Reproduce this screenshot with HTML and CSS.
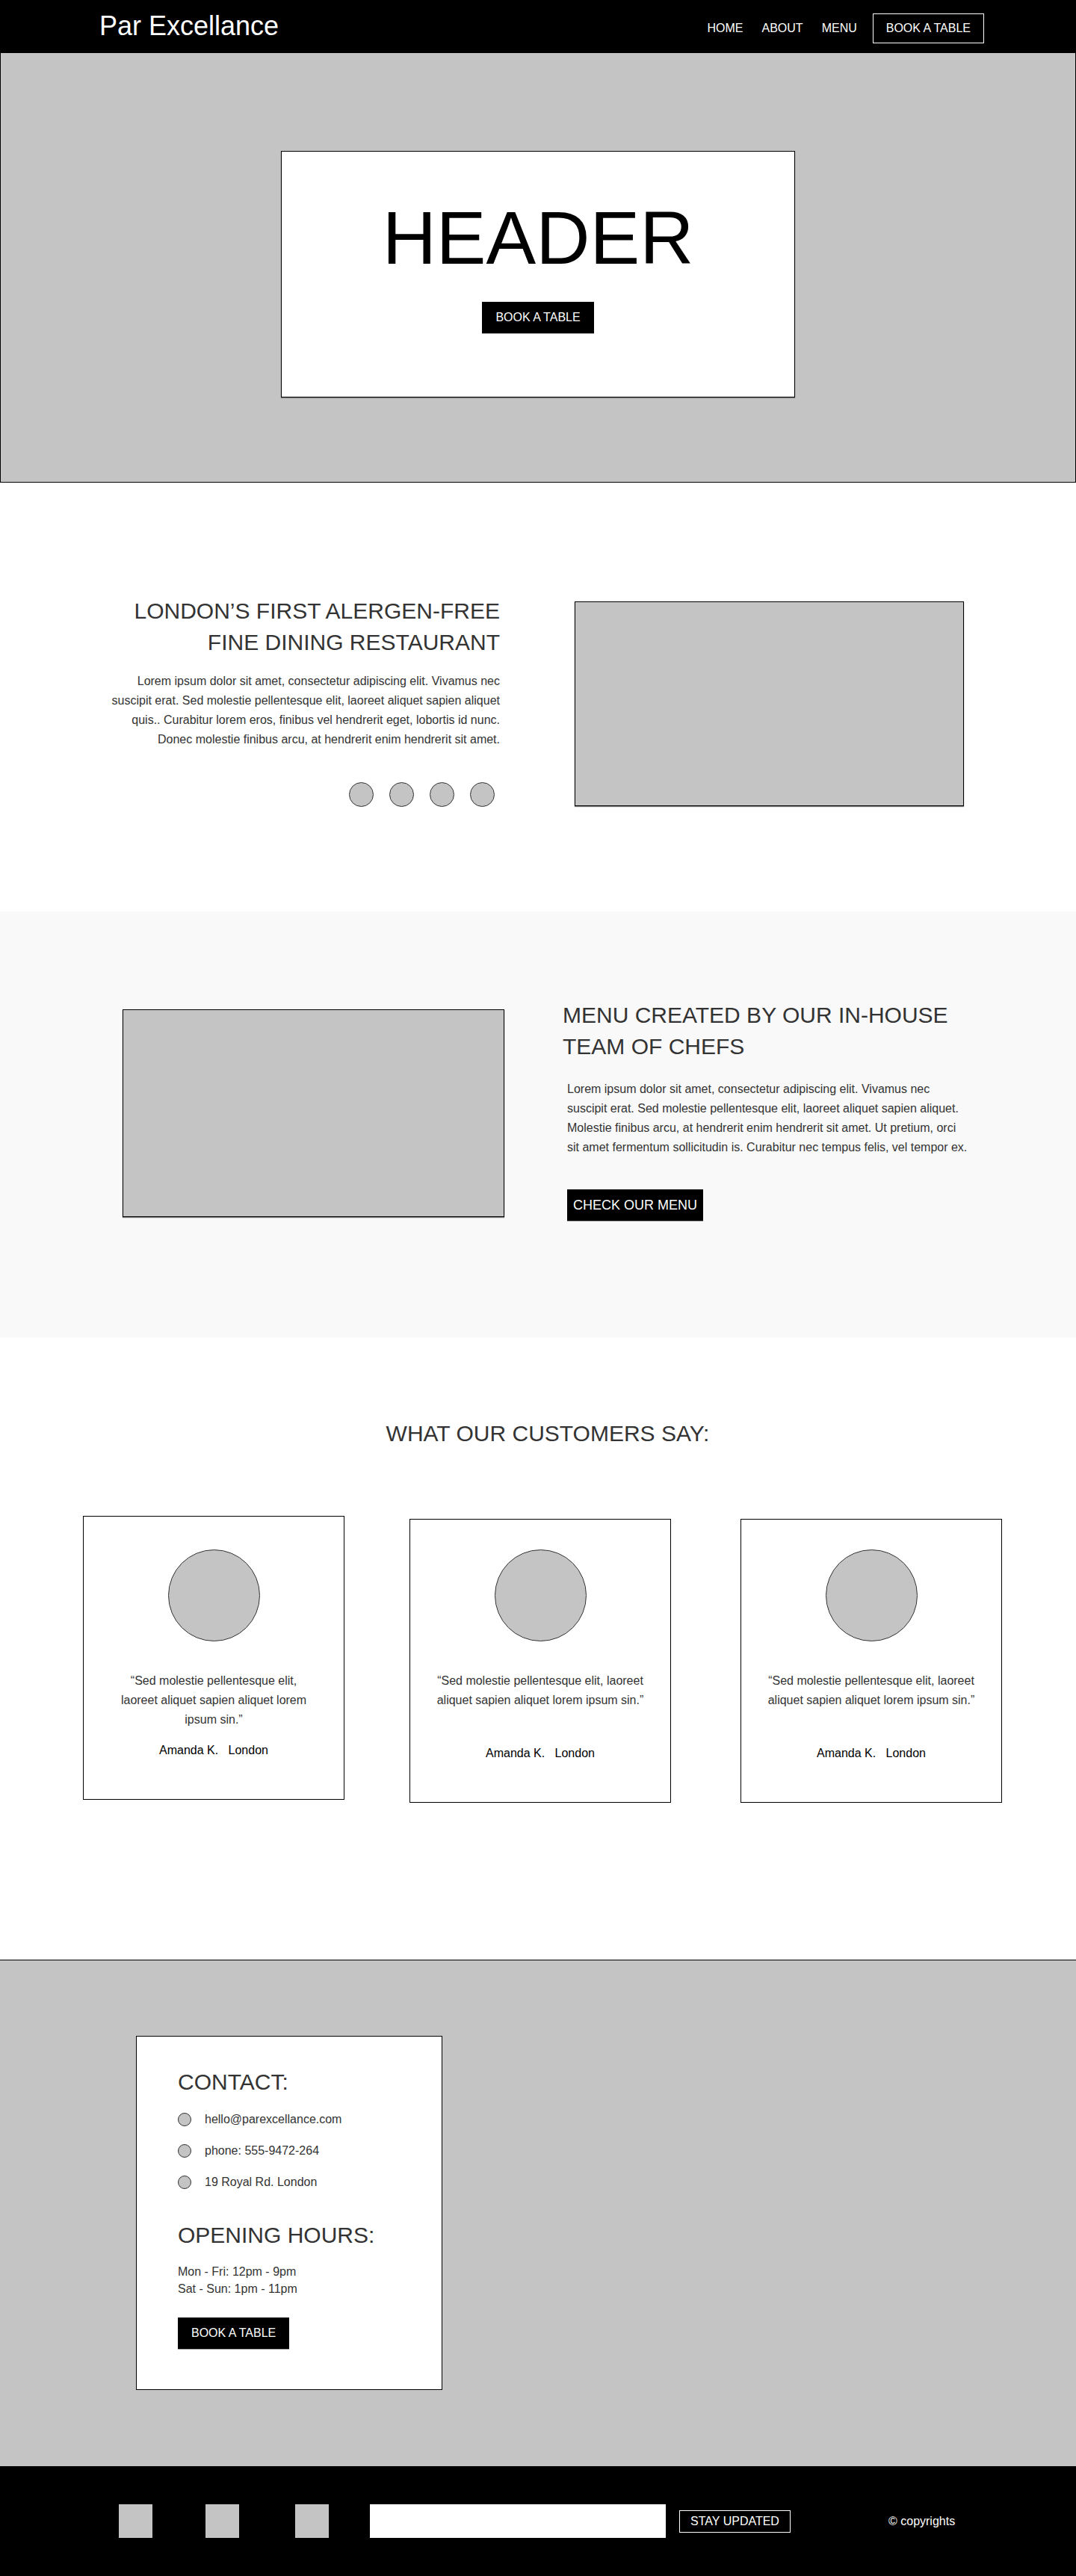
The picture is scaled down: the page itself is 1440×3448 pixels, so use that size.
FILE: index.html
```html
<!DOCTYPE html>
<html lang="en">
<head>
<meta charset="utf-8">
<title>Par Excellance</title>
<link rel="stylesheet" href="styles.css">
</head>
<body>
<header class="navbar">
  <div class="logo">Par Excellance</div>
  <nav class="nav">
    <div class="nav-links">
      <a href="#" class="nav-link">HOME</a>
      <a href="#" class="nav-link">ABOUT</a>
      <a href="#" class="nav-link">MENU</a>
    </div>
    <a href="#" class="nav-cta">BOOK A TABLE</a>
  </nav>
</header>

<section class="hero">
  <div class="hero-card">
    <h1 class="hero-title">HEADER</h1>
    <a href="#" class="btn hero-btn">BOOK A TABLE</a>
  </div>
</section>

<section class="about">
  <div class="about-text">
    <h2 class="heading">LONDON’S FIRST ALERGEN-FREE FINE DINING RESTAURANT</h2>
    <p class="body-text about-para">Lorem ipsum dolor sit amet, consectetur adipiscing elit. Vivamus nec suscipit erat. Sed molestie pellentesque elit, laoreet aliquet sapien aliquet quis.. Curabitur lorem eros, finibus vel hendrerit eget, lobortis id nunc. Donec molestie finibus arcu, at hendrerit enim hendrerit sit amet.</p>
    <div class="dots">
      <span class="dot"></span>
      <span class="dot"></span>
      <span class="dot"></span>
      <span class="dot"></span>
    </div>
  </div>
  <div class="placeholder about-image"></div>
</section>

<section class="menu">
  <div class="placeholder menu-image"></div>
  <div class="menu-text">
    <h2 class="heading">MENU CREATED BY OUR IN-HOUSE TEAM OF CHEFS</h2>
    <p class="body-text menu-para">Lorem ipsum dolor sit amet, consectetur adipiscing elit. Vivamus nec suscipit erat. Sed molestie pellentesque elit, laoreet aliquet sapien aliquet. Molestie finibus arcu, at hendrerit enim hendrerit sit amet. Ut pretium, orci sit amet fermentum sollicitudin is. Curabitur nec tempus felis, vel tempor ex.</p>
    <a href="#" class="btn menu-btn">CHECK OUR MENU</a>
  </div>
</section>

<section class="testimonials">
  <h2 class="testimonials-title">WHAT OUR CUSTOMERS SAY:</h2>
  <div class="cards">
    <article class="card card-first">
      <div class="avatar"></div>
      <p class="quote quote-narrow">“Sed molestie pellentesque elit, laoreet aliquet sapien aliquet lorem ipsum sin.”</p>
      <p class="author">Amanda K.&nbsp;&nbsp;&nbsp;London</p>
    </article>
    <article class="card">
      <div class="avatar"></div>
      <p class="quote">“Sed molestie pellentesque elit, laoreet aliquet sapien aliquet lorem ipsum sin.”</p>
      <p class="author">Amanda K.&nbsp;&nbsp;&nbsp;London</p>
    </article>
    <article class="card card-last">
      <div class="avatar"></div>
      <p class="quote">“Sed molestie pellentesque elit, laoreet aliquet sapien aliquet lorem ipsum sin.”</p>
      <p class="author">Amanda K.&nbsp;&nbsp;&nbsp;London</p>
    </article>
  </div>
</section>

<section class="contact">
  <div class="contact-card">
    <h3 class="contact-heading">CONTACT:</h3>
    <ul class="contact-list">
      <li class="contact-item"><span class="contact-icon"></span><span>hello@parexcellance.com</span></li>
      <li class="contact-item"><span class="contact-icon"></span><span>phone: 555-9472-264</span></li>
      <li class="contact-item"><span class="contact-icon"></span><span>19 Royal Rd. London</span></li>
    </ul>
    <h3 class="contact-heading hours-heading">OPENING HOURS:</h3>
    <p class="hours">Mon - Fri: 12pm - 9pm<br>Sat - Sun: 1pm - 11pm</p>
    <a href="#" class="btn contact-btn">BOOK A TABLE</a>
  </div>
</section>

<footer class="footer">
  <div class="socials">
    <span class="social"></span>
    <span class="social social-mid"></span>
    <span class="social"></span>
  </div>
  <input class="subscribe-input" type="email" aria-label="Email address">
  <button class="subscribe-btn" type="button">STAY UPDATED</button>
  <span class="copyright">© copyrights</span>
</footer>
</body>
</html>
```

FILE: styles.css
```css
* {
  box-sizing: border-box;
}

body {
  margin: 0;
  font-family: "Liberation Sans", Arial, sans-serif;
  color: #333;
  background: #fff;
}

a {
  text-decoration: none;
}

/* NAVBAR */
.navbar {
  height: 70px;
  background: #000;
  display: flex;
  align-items: center;
  justify-content: space-between;
  padding: 0 123px 0 133px;
}

.logo {
  font-size: 36px;
  color: #fff;
}

.nav {
  display: flex;
  align-items: center;
  gap: 21px;
  margin-top: 6px;
}

.nav-links {
  display: flex;
  gap: 25px;
}

.nav-link {
  color: #fff;
  font-size: 16px;
  line-height: 18px;
}

.nav-cta {
  color: #fff;
  font-size: 16px;
  line-height: 18px;
  border: 1px solid #fff;
  padding: 10px 17px;
}

/* HERO */
.hero {
  height: 576px;
  background: #c4c4c4;
  border: 1px solid #000;
  padding-top: 131px;
  display: flex;
  flex-direction: column;
  align-items: center;
}

.hero-card {
  width: 688px;
  height: 330px;
  background: #fff;
  border: 1px solid #000;
  box-shadow: 0 1px 1px rgba(0, 0, 0, 0.35);
  padding-top: 58px;
  display: flex;
  flex-direction: column;
  align-items: center;
}

.hero-title {
  margin: 0;
  font-size: 100px;
  font-weight: 400;
  line-height: 115px;
  color: #000;
}

.btn {
  display: inline-block;
  background: #000;
  color: #fff;
  font-size: 16px;
  line-height: 18px;
  padding: 12px 18px;
  box-shadow: 0 1px 0 rgba(0, 0, 0, 0.35);
}

.hero-btn {
  margin-top: 28px;
}

/* SHARED */
.heading {
  margin: 0;
  font-size: 30px;
  font-weight: 400;
  line-height: 42px;
  color: #333;
}

.body-text {
  margin: 0;
  font-size: 16px;
  line-height: 26px;
  color: #333;
}

.placeholder {
  background: #c4c4c4;
  border: 1px solid #000;
  box-shadow: 0 1px 1px rgba(0, 0, 0, 0.5);
}

/* ABOUT */
.about {
  display: flex;
  align-items: flex-end;
  gap: 100px;
  padding: 151px 0 140px 143px;
}

.about-text {
  width: 526px;
  text-align: right;
  display: flex;
  flex-direction: column;
}

.about-para {
  margin-top: 18px;
}

.dots {
  display: flex;
  justify-content: flex-end;
  gap: 21px;
  margin-top: 44px;
  padding-right: 7px;
}

.dot {
  width: 33px;
  height: 33px;
  border-radius: 50%;
  background: #c4c4c4;
  border: 1px solid #333;
}

.about-image {
  width: 521px;
  height: 274px;
  margin-bottom: 1px;
}

/* MENU */
.menu {
  background: #f9f9f9;
  display: flex;
  align-items: flex-start;
  gap: 78px;
  padding: 118px 0 156px 164px;
}

.menu-image {
  width: 511px;
  height: 278px;
  margin-top: 13px;
}

.menu-text {
  width: 548px;
  display: flex;
  flex-direction: column;
  align-items: flex-start;
}

.menu-para {
  width: 538px;
  margin: 23px 0 0 6px;
}

.menu-btn {
  margin: 43px 0 0 6px;
  font-size: 18px;
  line-height: 21px;
  padding: 10.5px 8px;
}

/* TESTIMONIALS */
.testimonials {
  padding: 112px 0 210px;
}

.testimonials-title {
  margin: 0;
  font-size: 30px;
  font-weight: 400;
  line-height: 34px;
  color: #333;
  text-align: center;
  padding-left: 26px;
}

.cards {
  display: flex;
  align-items: flex-start;
  gap: 87px;
  padding-left: 111px;
  margin-top: 93px;
}

.card {
  width: 350px;
  height: 380px;
  border: 1px solid #000;
  margin-top: 4px;
  padding-top: 40px;
  padding-bottom: 56px;
  display: flex;
  flex-direction: column;
  align-items: center;
}

.card-first {
  margin-top: 0;
  padding-top: 44px;
}

.card-last {
  margin-left: 6px;
}

.avatar {
  width: 123px;
  height: 123px;
  border-radius: 50%;
  background: #c4c4c4;
  border: 1px solid #333;
  flex-shrink: 0;
}

.quote {
  margin: 40px 0 0;
  width: 300px;
  font-size: 16px;
  line-height: 26px;
  color: #333;
  text-align: center;
}

.quote-narrow {
  width: 262px;
}

.author {
  margin: auto 0 0;
  font-size: 16px;
  line-height: 18px;
  color: #000;
}

/* CONTACT */
.contact {
  background: #c4c4c4;
  border-top: 1px solid #000;
  padding: 101px 0 102px 182px;
}

.contact-card {
  width: 410px;
  height: 474px;
  background: #fff;
  border: 1px solid #000;
  padding: 44px 0 0 55px;
}

.contact-heading {
  margin: 0;
  font-size: 30px;
  font-weight: 400;
  line-height: 34px;
  color: #333;
}

.contact-list {
  list-style: none;
  margin: 24px 0 0;
  padding: 0;
  display: flex;
  flex-direction: column;
  gap: 24px;
}

.contact-item {
  display: flex;
  align-items: flex-start;
  gap: 18px;
  font-size: 16px;
  line-height: 18px;
  color: #333;
}

.contact-icon {
  width: 18px;
  height: 18px;
  border-radius: 50%;
  background: #c4c4c4;
  border: 1px solid #333;
  flex-shrink: 0;
}

.hours-heading {
  margin-top: 45px;
}

.hours {
  margin: 20px 0 0;
  font-size: 16px;
  line-height: 23px;
  color: #333;
}

.contact-btn {
  margin-top: 27px;
}

/* FOOTER */
.footer {
  height: 147px;
  background: #000;
  display: flex;
  align-items: center;
  padding-left: 159px;
}

.socials {
  display: flex;
  gap: 71px;
}

.social {
  width: 45px;
  height: 45px;
  background: #c4c4c4;
}

.social-mid {
  margin-right: 4px;
}

.subscribe-input {
  margin-left: 55px;
  width: 396px;
  height: 45px;
  background: #fff;
  border: none;
  padding: 0 10px;
  font-family: inherit;
  font-size: 16px;
}

.subscribe-btn {
  margin-left: 18px;
  width: 149px;
  height: 30px;
  background: transparent;
  border: 1px solid #fff;
  color: #fff;
  font-family: inherit;
  font-size: 16px;
  padding: 0;
}

.copyright {
  margin-left: 131px;
  color: #fff;
  font-size: 16px;
}
```
